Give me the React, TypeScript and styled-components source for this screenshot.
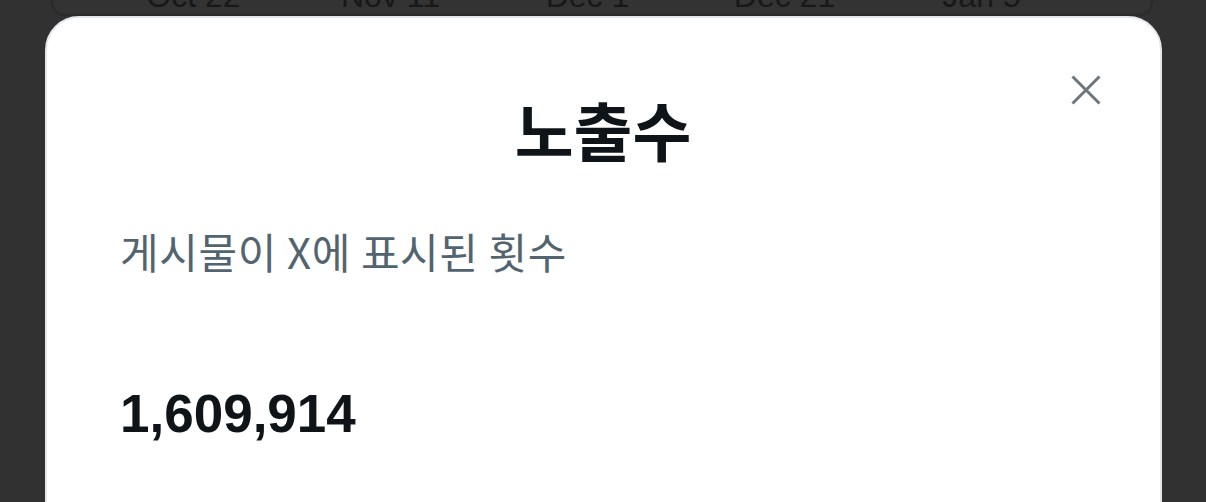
import React from "react";
import styled, { createGlobalStyle } from "styled-components";

const GlobalStyle = createGlobalStyle`
  html, body {
    margin: 0;
    padding: 0;
    background: #313131;
    overflow: hidden;
  }
  body {
    width: 1206px;
    height: 502px;
  }
`;

const Page = styled.div`
  width: 1206px;
  height: 502px;
  display: flex;
  flex-direction: column;
  background: #313131;
  overflow: hidden;
`;

const ChartCard = styled.div`
  margin: 0 53px 0 51px;
  height: 16px;
  flex: none;
  box-sizing: border-box;
  background: #333333;
  border-left: 2px solid #2a2a2a;
  border-right: 2px solid #2a2a2a;
  border-bottom: 2px solid #2b2b2b;
  border-radius: 0 0 14px 14px;
  display: flex;
  align-items: flex-end;
  overflow: hidden;
`;

const AxisLabels = styled.div`
  display: grid;
  grid-template-columns: repeat(5, 197px);
  padding: 0 0 2px 42px;
  font-family: "Liberation Sans", Arial, sans-serif;
  font-size: 32px;
  line-height: 32px;
  color: #181818;
`;

const AxisLabel = styled.span`
  text-align: center;
`;

const Modal = styled.div`
  margin: 0 44px 0 45px;
  height: 520px;
  flex: none;
  box-sizing: border-box;
  background: #ffffff;
  border: 2px solid #e4e8eb;
  border-radius: 34px;
  padding: 0 74px 0 73px;
  display: flex;
  flex-direction: column;
`;

const Header = styled.div`
  display: grid;
  grid-template-columns: 1fr auto 1fr;
  padding-top: 56px;
`;

const Title = styled.h1`
  grid-column: 2;
  margin: 16px 0 0 0;
  font-family: "Noto Sans CJK KR", "Noto Sans", sans-serif;
  font-weight: 700;
  font-size: 64px;
  line-height: 76px;
  color: #0f1419;
`;

const CloseButton = styled.button`
  grid-column: 3;
  justify-self: end;
  align-self: start;
  width: 32px;
  height: 32px;
  margin-right: -16px;
  padding: 0;
  border: none;
  background: transparent;
  display: flex;
  align-items: center;
  justify-content: center;
  color: #6e767d;
  cursor: pointer;
`;

const Subtitle = styled.p`
  margin: 60px 0 0 0;
  font-family: "Noto Sans CJK KR", "Noto Sans", sans-serif;
  font-weight: 400;
  font-size: 42px;
  line-height: 50px;
  letter-spacing: 0.6px;
  color: #536471;
`;

const Count = styled.div`
  margin-top: 106px;
  font-family: "Liberation Sans", Arial, sans-serif;
  font-weight: 700;
  font-size: 53px;
  line-height: 64px;
  color: #0f1419;
`;

const labels = ["Oct 22", "Nov 11", "Dec 1", "Dec 21", "Jan 5"];

export default function App() {
  return (
    <>
      <GlobalStyle />
      <Page>
        <ChartCard>
          <AxisLabels>
            {labels.map((l) => (
              <AxisLabel key={l}>{l}</AxisLabel>
            ))}
          </AxisLabels>
        </ChartCard>
        <Modal>
          <Header>
            <Title>노출수</Title>
            <CloseButton aria-label="닫기">
              <svg width="30" height="30" viewBox="0 0 30 30" fill="none">
                <path
                  d="M1.5 1.5 L28.5 28.5 M28.5 1.5 L1.5 28.5"
                  stroke="currentColor"
                  strokeWidth="3"
                  strokeLinecap="butt"
                />
              </svg>
            </CloseButton>
          </Header>
          <Subtitle>게시물이 X에 표시된 횟수</Subtitle>
          <Count>1,609,914</Count>
        </Modal>
      </Page>
    </>
  );
}
